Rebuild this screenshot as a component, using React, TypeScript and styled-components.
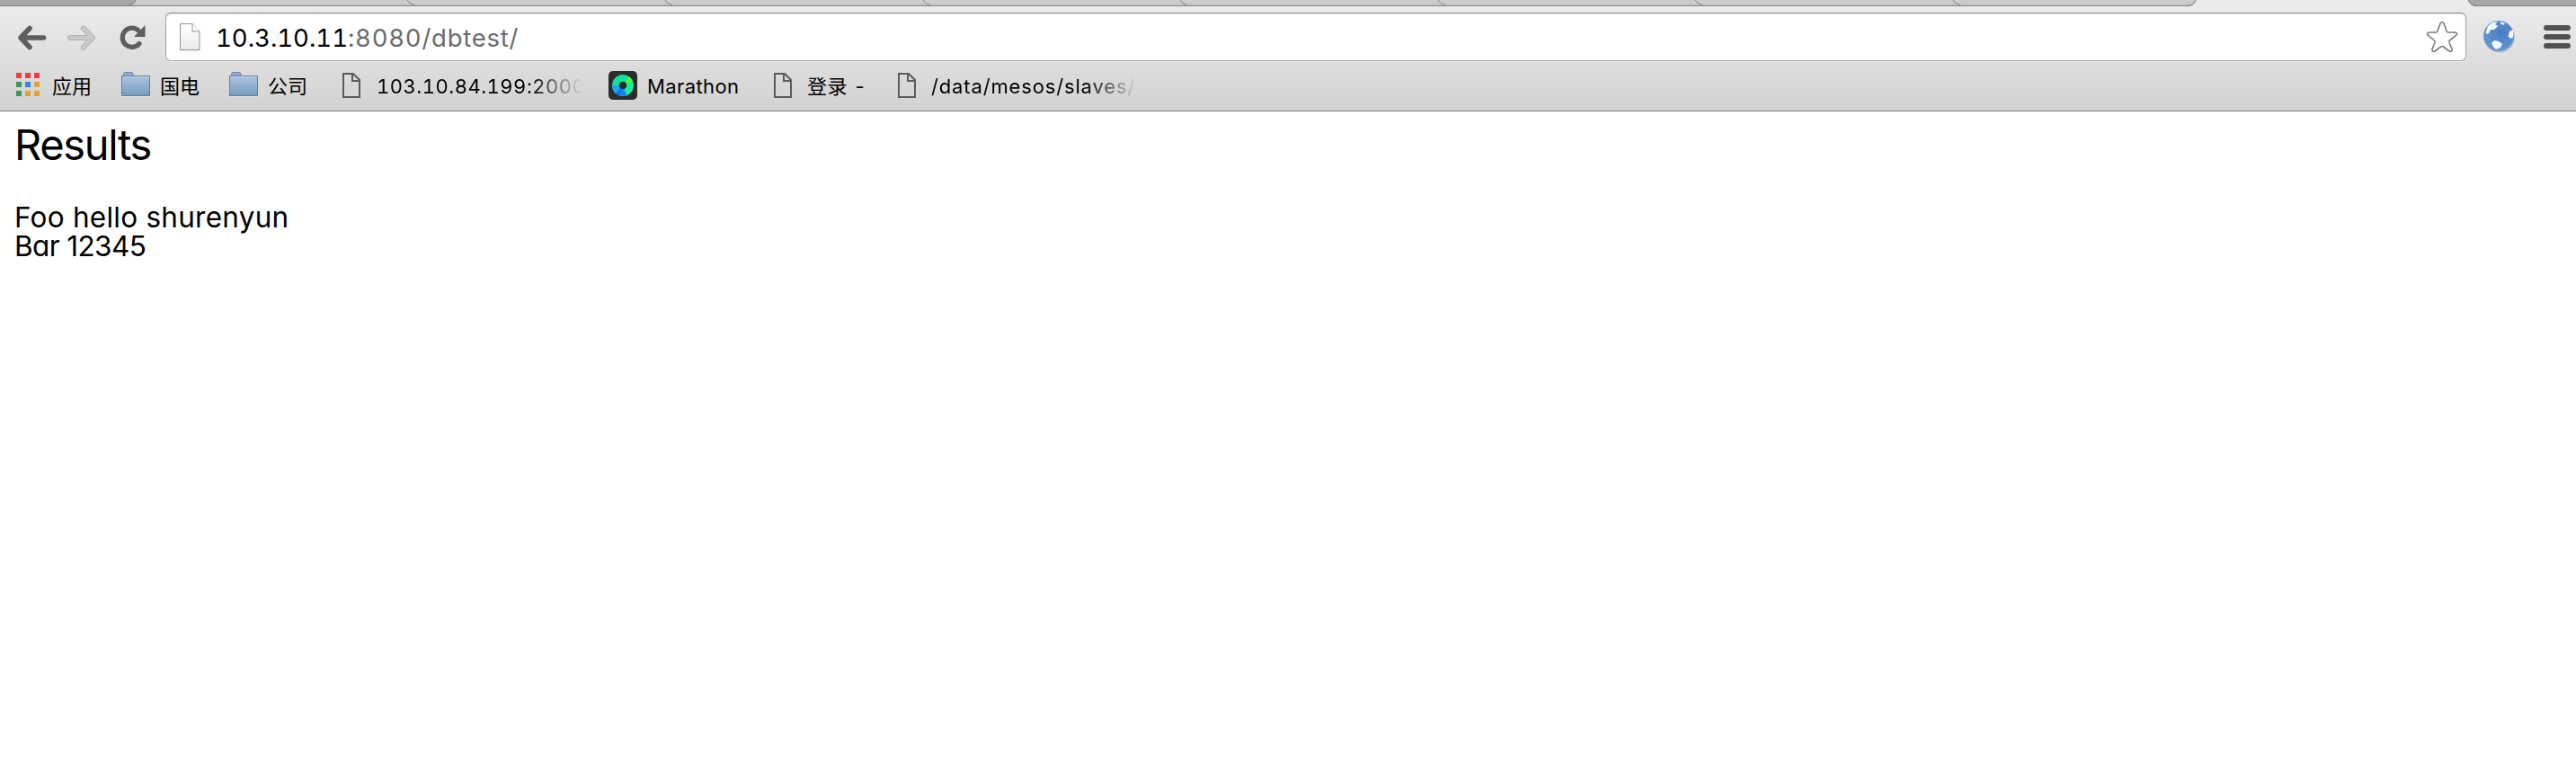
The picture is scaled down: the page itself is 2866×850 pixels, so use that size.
import React from 'react';
import styled, { createGlobalStyle } from 'styled-components';

const Global = createGlobalStyle`
  * { box-sizing: border-box; }
  body { margin: 0; background: #fff; }
`;

const Window = styled.div`
  width: 2866px;
  height: 850px;
  overflow: hidden;
  background: #fff;
  color: #000;
`;

const TabStrip = styled.svg`
  display: block;
  width: 2866px;
  height: 7px;
`;

const Chrome = styled.header`
  height: 117px;
  background: linear-gradient(#ebebeb, #d2d2d2);
  border-bottom: 1px solid #7d7d7d;
`;

const Toolbar = styled.div`
  display: flex;
  align-items: flex-start;
  height: 63px;
  padding: 7px 6px 0 18px;
`;

const Icon = styled.svg<{ $ml?: number; $mt?: number }>`
  display: block;
  flex: none;
  overflow: visible;
  margin-left: ${(p) => p.$ml ?? 0}px;
  margin-top: ${(p) => p.$mt ?? 0}px;
`;

const Omnibox = styled.div`
  display: flex;
  align-items: center;
  flex: none;
  width: 2560px;
  height: 54px;
  margin-left: 22px;
  padding: 0 8px 0 15px;
  background: #fff;
  border: 1px solid #a0a0a0;
  border-top-color: #8a8a8a;
  border-radius: 6px;
  box-shadow: inset 0 1px 1px #e4e4e4, 0 1px 0 #efefef;
`;

const Address = styled.div`
  flex: 1;
  margin-left: 17px;
  padding-top: 2px;
  font: 400 27.5px/50px Inter, sans-serif;
  font-feature-settings: 'tnum';
  white-space: pre;
`;

const Part = styled.span<{ $ls: number; $dark?: boolean }>`
  letter-spacing: ${(p) => p.$ls}px;
  color: ${(p) => (p.$dark ? '#000' : '#6b6b6b')};
`;

const Bookmarks = styled.nav`
  display: flex;
  height: 52px;
  padding-left: 18px;
`;

const Bookmark = styled.div<{ $w: number }>`
  display: flex;
  flex: none;
  width: ${(p) => p.$w}px;
  height: 52px;
`;

const Label = styled.span<{ $ml: number; $ls: number; $fade?: number }>`
  flex: none;
  margin-left: ${(p) => p.$ml}px;
  width: ${(p) => (p.$fade ? `${p.$fade}px` : 'auto')};
  overflow: ${(p) => (p.$fade ? 'hidden' : 'visible')};
  font: 400 22px/52px Inter, 'Noto Sans CJK SC', sans-serif;
  font-feature-settings: 'tnum';
  letter-spacing: ${(p) => p.$ls}px;
  white-space: pre;
  ${(p) => p.$fade && 'mask-image: linear-gradient(90deg, #000 calc(100% - 58px), transparent);'}
`;

const Page = styled.main`
  padding: 10px 16px;
  font-family: Inter, sans-serif;
  font-weight: 400;
  font-feature-settings: 'cv11';
`;

const Title = styled.h2`
  margin: 0;
  font-size: 47px;
  font-weight: inherit;
  line-height: 54px;
  letter-spacing: -1.35px;
`;

const Line = styled.div<{ $ls: number }>`
  font-size: 31.5px;
  line-height: 32px;
  letter-spacing: ${(p) => p.$ls}px;
`;

const Lines = styled.div`
  margin-top: 38px;
`;

const tabEdges = [457, 744, 1031, 1317, 1604, 1890, 2177];

const Tabs = () => (
  <TabStrip viewBox="0 0 2866 7">
    <defs>
      <linearGradient id="tab" x1="0" y1="0" x2="0" y2="1">
        <stop offset="0" stopColor="#cfcfcf" />
        <stop offset="1" stopColor="#c4c4c4" />
      </linearGradient>
    </defs>
    <rect width="2866" height="7" fill="#a7a7a7" />
    <path d="M151 0Q149 5 142 6H2436Q2441 4 2443 0Z" fill="url(#tab)" />
    <path d="M151 0Q149 5 142 6" fill="none" stroke="#777" />
    {tabEdges.map((x) => (
      <path key={x} d={`M${x - 4} 0Q${x - 1} 5 ${x + 4} 6`} fill="none" stroke="#858585" />
    ))}
    <rect y="6" width="2866" height="1" fill="#858585" />
    <path d="M2443 0Q2441 6 2434 7H2755Q2748 6 2746 0Z" fill="#ebebeb" />
    <path d="M2443 0Q2441 6 2434 6.500M2746 0Q2748 6 2755 6.500" fill="none" stroke="#777" />
  </TabStrip>
);

const Folder = () => (
  <Icon width="34" height="30" viewBox="0 0 34 30" $mt={9}>
    <defs>
      <linearGradient id="folder" x1="0" y1="0" x2="0" y2="1">
        <stop offset="0" stopColor="#adc6e0" />
        <stop offset="1" stopColor="#739ac0" />
      </linearGradient>
    </defs>
    <path d="M3.500 6V3.500Q3.500 1.500 5.500 1.500H12Q14 1.500 14 3.500V6" fill="#92afcc" stroke="#6785a5" />
    <rect x="1.500" y="5.500" width="31" height="22" fill="url(#folder)" stroke="#617e9c" />
    <path d="M2 6.500H32" stroke="#c3d6e9" />
    <path d="M1 28.500H33" stroke="#ededed" />
  </Icon>
);

const FileIcon = () => (
  <Icon width="20" height="28" viewBox="0 0 20 28" $mt={11}>
    <path d="M1 1H12L19 8V27H1ZM11 1V9H19" fill="none" stroke="#5b5b5b" strokeWidth="2" />
  </Icon>
);

const appColors = ['#e8403c', '#e8403c', '#e8403c', '#3a9a5b', '#2f86ee', '#eaa02e', '#3a9a5b', '#eaa02e', '#eaa02e'];

export default function App() {
  return (
    <Window>
      <Global />
      <Tabs />
      <Chrome>
        <Toolbar>
          <Icon width="34" height="28" viewBox="0 0 34 28" $mt={14}>
            <path d="M30.500 14H6M15 3.500L5 14L15 24.500" fill="none" stroke="#5e5e5e" strokeWidth="5.600" strokeLinecap="round" strokeLinejoin="round" />
          </Icon>
          <Icon width="34" height="28" viewBox="0 0 34 28" $ml={22} $mt={14}>
            <path d="M4 14H28M19 3.500L29 14L19 24.500" fill="none" stroke="#b0b0b0" strokeWidth="6" strokeLinecap="round" strokeLinejoin="round" />
            <path d="M4 14H28M19 3.500L29 14L19 24.500" fill="none" stroke="#c9c9c9" strokeWidth="4.200" strokeLinecap="round" strokeLinejoin="round" />
          </Icon>
          <Icon width="30" height="28" viewBox="0 0 30 28" $ml={24} $mt={14}>
            <path d="M23 20.500A10.600 10.600 0 1 1 22 6" fill="none" stroke="#5e5e5e" strokeWidth="5.200" strokeLinecap="round" />
            <path d="M29.500 0V13H17Z" fill="#5e5e5e" />
          </Icon>
          <Omnibox>
            <Icon width="23" height="32" viewBox="0 0 23 32" $mt={1}>
              <defs>
                <linearGradient id="paper" x1="0" y1="0" x2="0" y2="1">
                  <stop offset="0" stopColor="#fff" />
                  <stop offset="1" stopColor="#eaeaec" />
                </linearGradient>
              </defs>
              <path d="M.5 .5H14L22 9V29.500H.5Z" fill="url(#paper)" stroke="#949494" />
              <path d="M14 .5V9H22" fill="#fff" stroke="#949494" />
              <path d="M0 31H23" stroke="#ececec" />
            </Icon>
            <Address>
              <Part $dark $ls={0}>10.3.10.11</Part>
              <Part $ls={0.75}>:8080/dbtest/</Part>
            </Address>
            <Icon width="36" height="36" viewBox="0 0 36 36" $mt={-1}>
              <path d="M16 3Q18 0 20 3L23 11.500Q23.400 13 25 13H32Q36 13.500 33.500 16.500L27 21.500Q25.500 22.700 26 24.200L29 31.500Q29.600 35 26 34L19.500 29Q18 28 16.500 29L10 34Q6.400 35 7 31.500L10 24.200Q10.500 22.700 9 21.500L2.500 16.500Q0 13.500 4 13H11Q12.600 13 13 11.500Z" fill="#fff" stroke="#7b7b7b" strokeWidth="1.600" />
            </Icon>
          </Omnibox>
          <Icon width="38" height="38" viewBox="0 0 38 38" $ml={17} $mt={7}>
            <defs>
              <radialGradient id="globe" cx=".6" cy=".4" r=".6">
                <stop offset="0" stopColor="#4a7cc4" />
                <stop offset="1" stopColor="#6496d2" />
              </radialGradient>
            </defs>
            <circle cx="20" cy="20.500" r="17" fill="#bdbdbd" />
            <circle cx="19" cy="19" r="17" fill="url(#globe)" />
            <path d="M5 14L7 8L12 4L18 3L15 6L18 8L14 12L10 12L8 16L5 17ZM21 3L26 5L24 7L21 5ZM31 14L35 12L35.500 18L34 22L29.500 20ZM11 27L14 24L19 25L23 28L21 32L16 34L13 31Z" fill="#f4f8fd" />
          </Icon>
          <Icon width="30" height="26" viewBox="0 0 30 26" $ml={31} $mt={14}>
            {[0, 10, 20].map((y) => (
              <rect key={y} y={y} width="30" height="6" rx="3" fill="#515151" />
            ))}
          </Icon>
        </Toolbar>
        <Bookmarks>
          <Bookmark $w={116}>
            <Icon width="26" height="28" viewBox="0 0 26 28" $mt={11}>
              {appColors.map((c, i) => (
                <rect key={i} x={(i % 3) * 10} y={Math.floor(i / 3) * 10} width="6" height="6" fill={c} />
              ))}
            </Icon>
            <Label $ml={14} $ls={0}>应用</Label>
          </Bookmark>
          <Bookmark $w={120}>
            <Folder />
            <Label $ml={10} $ls={0}>国电</Label>
          </Bookmark>
          <Bookmark $w={127}>
            <Folder />
            <Label $ml={10} $ls={0}>公司</Label>
          </Bookmark>
          <Bookmark $w={296}>
            <FileIcon />
            <Label $ml={18} $ls={0.5} $fade={229}>103.10.84.199:20000</Label>
          </Bookmark>
          <Bookmark $w={184}>
            <Icon width="32" height="32" viewBox="0 0 32 32" $mt={9}>
              <rect width="32" height="32" rx="5" fill="#2b2b2b" />
              <circle cx="16" cy="16" r="12" fill="#12dfa0" />
              <path d="M16 16H4A12 12 0 0 0 8 25Z" fill="#19a9fb" />
              <path d="M16 16L8 25A12 12 0 0 0 12.500 27.500Z" fill="#0b6df5" />
              <path d="M16 16L12.500 27.500A12 12 0 0 0 20.500 27Z" fill="#1386fb" />
              <path d="M16 16L23 6.500A12 12 0 0 1 27 12Z" fill="#4df53c" />
              <path d="M16 16L27 12A12 12 0 0 1 20.500 27Z" fill="#10f09a" />
              <circle cx="16" cy="16" r="4.300" fill="#2b2b2b" />
            </Icon>
            <Label $ml={11} $ls={0.4}>Marathon</Label>
          </Bookmark>
          <Bookmark $w={138}>
            <FileIcon />
            <Label $ml={17} $ls={0.5}>登录 -</Label>
          </Bookmark>
          <Bookmark $w={280}>
            <FileIcon />
            <Label $ml={17} $ls={0.85} $fade={230}>/data/mesos/slaves/</Label>
          </Bookmark>
        </Bookmarks>
      </Chrome>
      <Page>
        <Title>Results</Title>
        <Lines>
          <Line $ls={0.25}>Foo hello shurenyun</Line>
          <Line $ls={-0.6}>Bar 12345</Line>
        </Lines>
      </Page>
    </Window>
  );
}
